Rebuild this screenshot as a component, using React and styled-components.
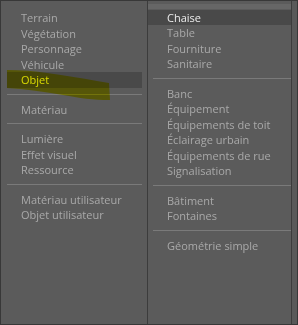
import React from 'react'
import styled, { createGlobalStyle } from 'styled-components'

const GlobalStyle = createGlobalStyle`
  html, body {
    margin: 0;
    padding: 0;
    background: #3a3a3a;
  }
  * {
    box-sizing: border-box;
  }
`

const Frame = styled.div`
  position: relative;
  width: 298px;
  height: 325px;
  display: flex;
  background: #5b5b5b;
  border: 1px solid #383838;
  font-family: 'Open Sans', 'Liberation Sans', sans-serif;
  font-size: 11px;
`

const Panel = styled.div`
  display: flex;
  flex-direction: column;
  width: ${(p) => p.width}px;
  padding: ${(p) => p.pad};
  border-right: 1px solid #3c3c3c;
`

const TopBand = styled.div`
  height: 5px;
  margin: 3px 0 0.5px 0;
  background: #666666;
`

const ScrollStrip = styled.div`
  flex: 1;
  background: #595959;
`

const Item = styled.div`
  height: 15.5px;
  line-height: 15.5px;
  padding-left: ${(p) => p.indent}px;
  white-space: nowrap;
  color: ${(p) => (p.current ? '#e4e400' : p.selected ? '#ececec' : '#a9a9a9')};
  background: ${(p) => (p.current || p.selected ? '#494949' : 'transparent')};
`

const Separator = styled.div`
  height: 1px;
  margin: 6px 0 7px ${(p) => p.inset || 0}px;
  background: #7a7a7a;
`

// the yellow highlighter stroke drawn over the menu
const Highlighter = styled.svg`
  position: absolute;
  left: 0;
  top: 0;
  mix-blend-mode: multiply;
  pointer-events: none;
`

const leftGroups = [
  ['Terrain', 'Végétation', 'Personnage', 'Véhicule', 'Objet'],
  ['Matériau'],
  ['Lumière', 'Effet visuel', 'Ressource'],
  ['Matériau utilisateur', 'Objet utilisateur'],
]

const rightGroups = [
  ['Chaise', 'Table', 'Fourniture', 'Sanitaire'],
  ['Banc', 'Équipement', 'Équipements de toit', 'Éclairage urbain', 'Équipements de rue', 'Signalisation'],
  ['Bâtiment', 'Fontaines'],
  ['Géométrie simple'],
]

function Groups({ groups, indent, inset, current, selected }) {
  return groups.map((group, gi) => (
    <React.Fragment key={gi}>
      {gi > 0 && <Separator inset={inset} />}
      {group.map((label) => (
        <Item
          key={label}
          indent={indent}
          current={label === current}
          selected={label === selected}
        >
          {label}
        </Item>
      ))}
    </React.Fragment>
  ))
}

export default function App() {
  return (
    <>
      <GlobalStyle />
      <Frame>
        <Panel width={147} pad="9px 5px 0 6px">
          <Groups groups={leftGroups} indent={14} current="Objet" />
        </Panel>
        <Panel width={144} pad="0">
          <TopBand />
          <Groups groups={rightGroups} indent={19} inset={5} selected="Chaise" />
        </Panel>
        <ScrollStrip />
        <Highlighter width="120" height="110" viewBox="0 0 120 110">
          <path
            d="M6 69 C20 69 34 70 46 72 C62 74 80 77 96 80 L108 82 L109 99 C92 99 78 97 62 94 C44 91 24 88 6 87 Z"
            fill="#f0f000"
            opacity="0.9"
          />
        </Highlighter>
      </Frame>
    </>
  )
}
